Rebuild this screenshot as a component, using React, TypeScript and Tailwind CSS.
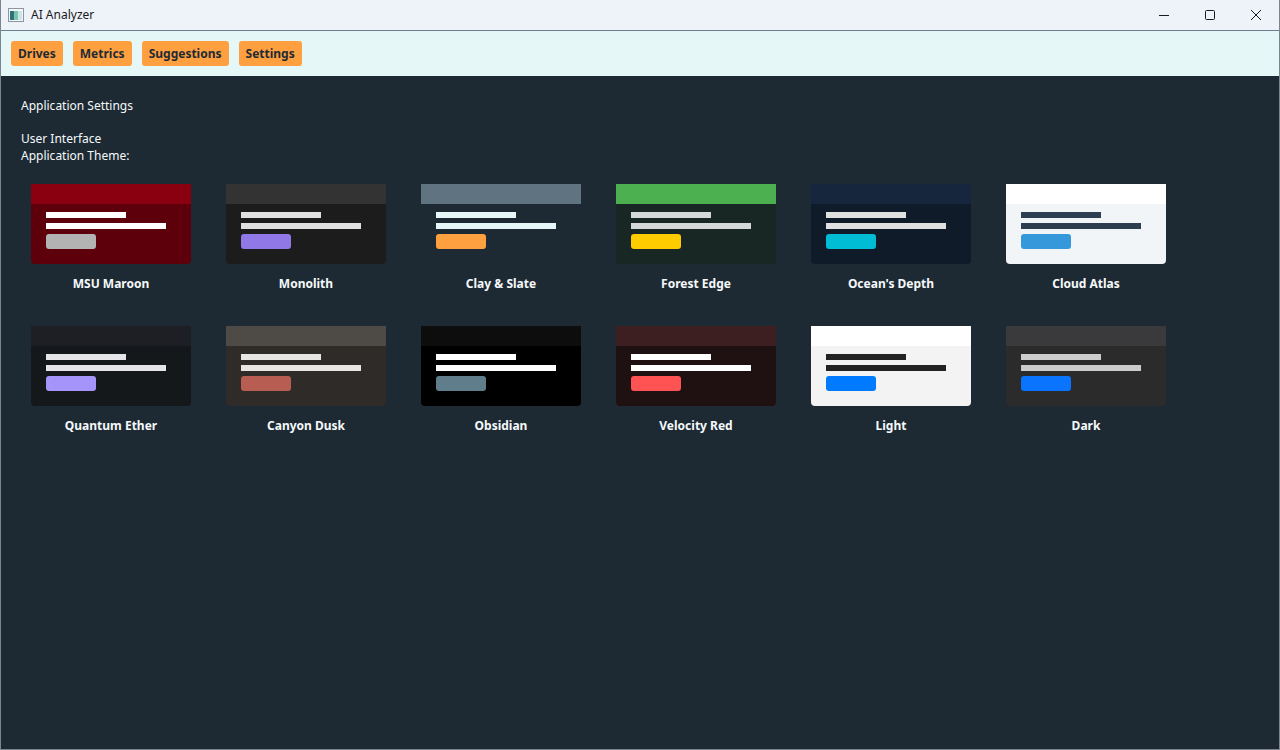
type Theme = {
  name: string
  header: string
  body: string
  line: string
  button: string
}

const themes: Theme[] = [
  { name: 'MSU Maroon', header: 'bg-[#8a0010]', body: 'bg-[#5e000b]', line: 'bg-[#ffffff]', button: 'bg-[#b3b3b3]' },
  { name: 'Monolith', header: 'bg-[#333333]', body: 'bg-[#1c1c1c]', line: 'bg-[#e0e0e0]', button: 'bg-[#9079e6]' },
  { name: 'Clay & Slate', header: 'bg-[#5f7480]', body: 'bg-[#1e2a33]', line: 'bg-[#e6f7f7]', button: 'bg-[#ffa040]' },
  { name: 'Forest Edge', header: 'bg-[#4caf50]', body: 'bg-[#182624]', line: 'bg-[#d4d8d8]', button: 'bg-[#ffcc00]' },
  { name: "Ocean's Depth", header: 'bg-[#16263d]', body: 'bg-[#0f1b29]', line: 'bg-[#e0e0e0]', button: 'bg-[#00bcd4]' },
  { name: 'Cloud Atlas', header: 'bg-[#ffffff]', body: 'bg-[#f2f5f8]', line: 'bg-[#2c3e50]', button: 'bg-[#3498db]' },
  { name: 'Quantum Ether', header: 'bg-[#1e1f24]', body: 'bg-[#15181b]', line: 'bg-[#e5e5e8]', button: 'bg-[#a594f9]' },
  { name: 'Canyon Dusk', header: 'bg-[#4e4a45]', body: 'bg-[#2e2b29]', line: 'bg-[#e8e6e3]', button: 'bg-[#b85d52]' },
  { name: 'Obsidian', header: 'bg-[#0d0d0d]', body: 'bg-[#000000]', line: 'bg-[#ffffff]', button: 'bg-[#607d8b]' },
  { name: 'Velocity Red', header: 'bg-[#3d1f22]', body: 'bg-[#1f1112]', line: 'bg-[#ffffff]', button: 'bg-[#ff5252]' },
  { name: 'Light', header: 'bg-[#ffffff]', body: 'bg-[#f3f3f3]', line: 'bg-[#222222]', button: 'bg-[#007bff]' },
  { name: 'Dark', header: 'bg-[#3a3a3d]', body: 'bg-[#2b2b2b]', line: 'bg-[#cccccc]', button: 'bg-[#0a74ff]' },
]

const tabs = ['Drives', 'Metrics', 'Suggestions', 'Settings']

function ThemeCard({ theme }: { theme: Theme }) {
  return (
    <div className="flex flex-col items-center">
      <div className={`w-[160px] h-[80px] rounded-b-[4px] overflow-hidden ${theme.body}`}>
        <div className={`h-[20px] ${theme.header}`} />
        <div className="pl-[15px] pt-[8px]">
          <div className={`w-[80px] h-[6px] ${theme.line}`} />
          <div className={`w-[120px] h-[6px] mt-[5px] ${theme.line}`} />
          <div className={`w-[50px] h-[15px] mt-[5px] rounded-[3px] ${theme.button}`} />
        </div>
      </div>
      <p className="mt-[12px] text-[12px] leading-[16px] font-bold text-[#f5f9fb]">{theme.name}</p>
    </div>
  )
}

export default function App() {
  return (
    <div className="w-[1280px] h-[750px] flex flex-col border-x border-b border-[#7a8590] overflow-hidden" style={{ fontFamily: '"Noto Sans", "Liberation Sans", sans-serif' }}>
      <div className="h-[31px] bg-[#eef2f9] flex items-center border-b border-[#6b7f8c]">
        <svg width="16" height="14" viewBox="0 0 16 14" className="ml-[7px]">
          <rect x="0.5" y="0.5" width="15" height="13" fill="#f4f6f8" stroke="#8a96a0" />
          <rect x="2" y="3" width="4" height="9" fill="#2f6f7f" />
          <rect x="6" y="3" width="4" height="9" fill="#7cc3a8" />
          <rect x="10" y="3" width="4" height="9" fill="#cfe3ea" />
        </svg>
        <span className="ml-[7px] text-[12px] text-[#1a1a1a]">AI Analyzer</span>
        <div className="ml-auto flex items-center h-full">
          <div className="w-[46px] h-full flex items-center justify-center">
            <svg width="10" height="10" viewBox="0 0 10 10"><path d="M0 5.5h10" stroke="#1a1a1a" strokeWidth="1" /></svg>
          </div>
          <div className="w-[46px] h-full flex items-center justify-center">
            <svg width="10" height="10" viewBox="0 0 10 10"><rect x="0.5" y="0.5" width="9" height="9" rx="1" fill="none" stroke="#1a1a1a" strokeWidth="1" /></svg>
          </div>
          <div className="w-[46px] h-full flex items-center justify-center">
            <svg width="10" height="10" viewBox="0 0 10 10"><path d="M0 0L10 10M10 0L0 10" stroke="#1a1a1a" strokeWidth="1" /></svg>
          </div>
        </div>
      </div>

      <div className="h-[45px] bg-[#e6f7f7] flex items-center gap-[10px] px-[10px]">
        {tabs.map((t) => (
          <button key={t} className="h-[25px] px-[7px] rounded-[3px] bg-[#ffa040] text-[12px] font-bold text-[#1e2a33]">
            {t}
          </button>
        ))}
      </div>

      <main className="flex-1 bg-[#1e2a33] px-[20px] pt-[22px] text-[12px] leading-[16px] text-[#f5f9fb]">
        <p>Application Settings</p>
        <p className="mt-[17px]">User Interface</p>
        <p className="mt-[1px]">Application Theme:</p>
        <div className="mt-[20px] pl-[10px] grid grid-cols-[repeat(6,160px)] gap-x-[35px] gap-y-[34px]">
          {themes.map((t) => (
            <ThemeCard key={t.name} theme={t} />
          ))}
        </div>
      </main>
    </div>
  )
}
